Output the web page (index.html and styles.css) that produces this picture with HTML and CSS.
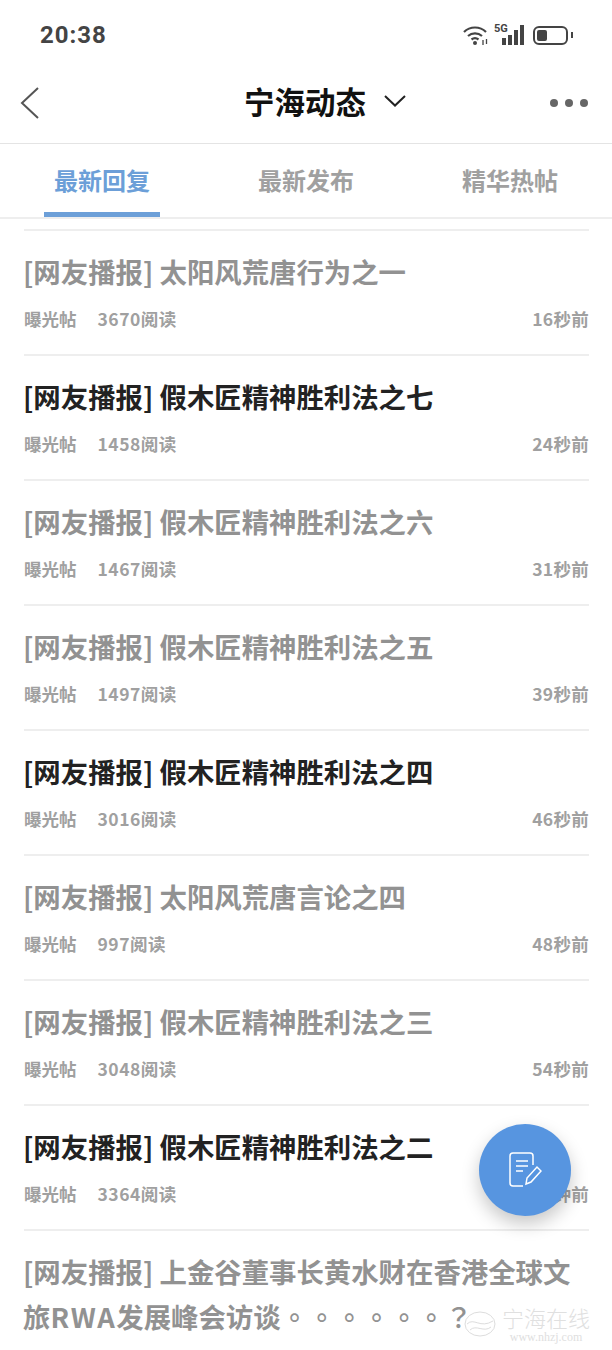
FILE: index.html
```html
<!doctype html>
<html lang="zh">
    <head>
        <meta charset="UTF-8" />
        <title>宁海动态</title>
        <link rel="stylesheet" href="styles.css">
    </head>
    <body>
        <div class="status-bar">
            <span class="clock">20:38</span>
            <div class="status-icons">
                <svg width="26" height="22" viewBox="0 0 26 22" fill="none" stroke="#444" stroke-width="2.200">
                    <path d="M1 8C7 2 17 2 23 8" />
                    <path d="M5 12C9 8.500 15 8.500 19 12" />
                    <path d="M8.500 15.500C10.500 14 13.500 14 15.500 15.500" />
                    <circle cx="12" cy="19" r="2" fill="#444" stroke="none" />
                    <path d="M20 16V21M23.500 15V20" stroke-width="1.300" />
                </svg>
                <div class="signal">
                    <span class="five-g">5G</span>
                    <div class="bars">
                        <i class="bar-1"></i>
                        <i class="bar-2"></i>
                        <i class="bar-3"></i>
                        <i class="bar-4"></i>
                    </div>
                </div>
                <div class="battery"><div class="battery-level"></div></div>
                <div class="battery-tip"></div>
            </div>
        </div>

        <div class="nav-bar">
            <svg class="back" width="19" height="32" viewBox="0 0 19 32" fill="none" stroke="#555" stroke-width="2">
                <path d="M18 1L2 16L18 31" />
            </svg>
            <div class="nav-title">
                <span>宁海动态</span>
                <svg width="22" height="12" viewBox="0 0 22 12" fill="none" stroke="#222" stroke-width="2">
                    <path d="M1 1L11 10.500L21 1" />
                </svg>
            </div>
            <div class="more"><i></i><i></i><i></i></div>
        </div>

        <div class="tabs">
            <div class="tab active">最新回复</div>
            <div class="tab">最新发布</div>
            <div class="tab">精华热帖</div>
        </div>

        <div class="list">
            <div class="row read">
                <div class="title">[网友播报] 太阳风荒唐行为之一</div>
                <div class="meta"><span>曝光帖</span><span class="views">3670阅读</span><span class="time">16秒前</span></div>
            </div>
            <div class="row">
                <div class="title">[网友播报] 假木匠精神胜利法之七</div>
                <div class="meta"><span>曝光帖</span><span class="views">1458阅读</span><span class="time">24秒前</span></div>
            </div>
            <div class="row read">
                <div class="title">[网友播报] 假木匠精神胜利法之六</div>
                <div class="meta"><span>曝光帖</span><span class="views">1467阅读</span><span class="time">31秒前</span></div>
            </div>
            <div class="row read">
                <div class="title">[网友播报] 假木匠精神胜利法之五</div>
                <div class="meta"><span>曝光帖</span><span class="views">1497阅读</span><span class="time">39秒前</span></div>
            </div>
            <div class="row">
                <div class="title">[网友播报] 假木匠精神胜利法之四</div>
                <div class="meta"><span>曝光帖</span><span class="views">3016阅读</span><span class="time">46秒前</span></div>
            </div>
            <div class="row read">
                <div class="title">[网友播报] 太阳风荒唐言论之四</div>
                <div class="meta"><span>曝光帖</span><span class="views">997阅读</span><span class="time">48秒前</span></div>
            </div>
            <div class="row read">
                <div class="title">[网友播报] 假木匠精神胜利法之三</div>
                <div class="meta"><span>曝光帖</span><span class="views">3048阅读</span><span class="time">54秒前</span></div>
            </div>
            <div class="row">
                <div class="title">[网友播报] 假木匠精神胜利法之二</div>
                <div class="meta"><span>曝光帖</span><span class="views">3364阅读</span><span class="time">1分钟前</span></div>
            </div>
            <div class="row read">
                <div class="title">[网友播报] 上金谷董事长黄水财在香港全球文旅<span class="latin">RWA</span>发展峰会访谈<span class="centered-punct" lang="zh-TW">。。。。。。？</span></div>
            </div>
        </div>

        <div class="fab">
            <svg width="34" height="36" viewBox="0 0 34 36" fill="none" stroke="#fff" stroke-width="1.500">
                <path d="M25 13V4Q25 1 22 1H5Q2 1 2 4V31Q2 34 5 34H15" />
                <path d="M8 9H20M8 14H20M8 19H15" />
                <path d="M18 32L19 26L29 15L33 19L23 30Z" />
            </svg>
        </div>

        <div class="watermark">
            <svg width="32" height="26" viewBox="0 0 32 26" fill="none" stroke="#ddd" stroke-width="1">
                <ellipse cx="16" cy="13" rx="15" ry="12" />
                <path d="M3 13C10 6 16 18 29 10M6 19C12 13 20 22 27 16" />
            </svg>
            <div class="watermark-text">
                <span class="watermark-name">宁海在线</span>
                <span class="watermark-url">www.nhzj.com</span>
            </div>
        </div>
    </body>
</html>
```

FILE: styles.css
```css
* {
    box-sizing: border-box;
}
html,
body {
    height: 1350px;
    overflow: hidden;
}
body {
    position: relative;
    margin: 0;
    background-color: #fff;
    font-family: "Noto Sans CJK SC", "Noto Sans", sans-serif;
}
.status-bar {
    display: flex;
    align-items: center;
    justify-content: space-between;
    height: 70px;
    padding: 0 39px 0 40px;
}
.clock {
    font-family: "Roboto", sans-serif;
    font-size: 24px;
    font-weight: 700;
    letter-spacing: 1px;
    color: #444;
}
.status-icons {
    display: flex;
    align-items: center;
}
.signal {
    position: relative;
    width: 30px;
    height: 20px;
    margin-left: 5px;
}
.five-g {
    position: absolute;
    left: 0;
    top: -2px;
    font-family: "Roboto", sans-serif;
    font-size: 11px;
    font-weight: 700;
    line-height: 12px;
    color: #444;
}
.bars {
    position: absolute;
    right: 0;
    bottom: 0;
    display: flex;
    align-items: flex-end;
    gap: 2px;
}
.bars i {
    display: block;
    width: 4px;
    background-color: #444;
}
.bar-1 {
    height: 7px;
}
.bar-2 {
    height: 10px;
}
.bar-3 {
    height: 15px;
}
.bar-4 {
    height: 20px;
}
.battery {
    width: 35px;
    height: 19px;
    margin-left: 9px;
    padding: 2px;
    border: 2px solid #444;
    border-radius: 6px;
}
.battery-level {
    width: 10px;
    height: 100%;
    background-color: #444;
    border-radius: 2px;
}
.battery-tip {
    width: 2px;
    height: 6px;
    margin-left: 3px;
    background-color: #444;
}
.nav-bar {
    position: relative;
    display: flex;
    align-items: center;
    justify-content: space-between;
    height: 74px;
    padding: 0 24px 8px 20px;
    border-bottom: 1px solid #e4e4e4;
}
.nav-title {
    position: absolute;
    left: 244px;
    top: 11px;
    display: flex;
    align-items: center;
    gap: 18px;
    font-size: 30.500px;
    font-weight: 700;
    line-height: 40px;
    color: #111;
}
.more {
    display: flex;
    gap: 7px;
}
.more i {
    display: block;
    width: 8px;
    height: 8px;
    border-radius: 50%;
    background-color: #666;
}
.tabs {
    display: flex;
    height: 75px;
    border-bottom: 2px solid #eee;
}
.tab {
    flex: 1;
    padding-top: 18px;
    font-size: 24px;
    font-weight: 700;
    line-height: 36px;
    text-align: center;
    color: #a0a0a0;
}
.tab.active {
    flex: 0 0 116px;
    height: 73px;
    margin: 0 44px;
    color: #6c9fd8;
    border-bottom: 5px solid #6c9fd8;
    white-space: nowrap;
}
.tab:nth-child(2) {
    flex: 0 0 204px;
}
.list {
    margin: 10px 23px 0 24px;
}
.row {
    height: 125px;
    padding-top: 18px;
    border-top: 2px solid #eee;
}
.title {
    margin-left: -1px;
    font-size: 27.400px;
    font-weight: 700;
    line-height: 45px;
    color: #222;
}
.row.read .title {
    color: #929292;
}
.latin {
    letter-spacing: 1.500px;
}
.centered-punct {
    font-family: "Noto Sans CJK TC", sans-serif;
    font-weight: 500;
    text-spacing-trim: space-all;
}
.meta {
    display: flex;
    margin-top: 12px;
    font-size: 17.500px;
    font-weight: 700;
    line-height: 26px;
    color: #a0a0a0;
}
.views {
    margin-left: 21px;
    letter-spacing: 0.500px;
}
.time {
    margin-left: auto;
    letter-spacing: 0.300px;
}
.fab {
    position: absolute;
    left: 479px;
    top: 1124px;
    display: flex;
    align-items: center;
    justify-content: center;
    width: 92px;
    height: 92px;
    border-radius: 50%;
    background-color: #5795e0;
    box-shadow: 0 8px 18px rgba(0, 0, 0, 0.22);
}
.watermark {
    position: absolute;
    left: 464px;
    top: 1304px;
    display: flex;
    align-items: center;
    gap: 6px;
    color: #e0e0e0;
}
.watermark-text {
    display: flex;
    flex-direction: column;
    align-items: center;
}
.watermark-name {
    font-size: 22px;
    font-weight: 300;
    line-height: 26px;
}
.watermark-url {
    font-family: "Liberation Serif", serif;
    font-size: 12px;
    line-height: 14px;
}
```
